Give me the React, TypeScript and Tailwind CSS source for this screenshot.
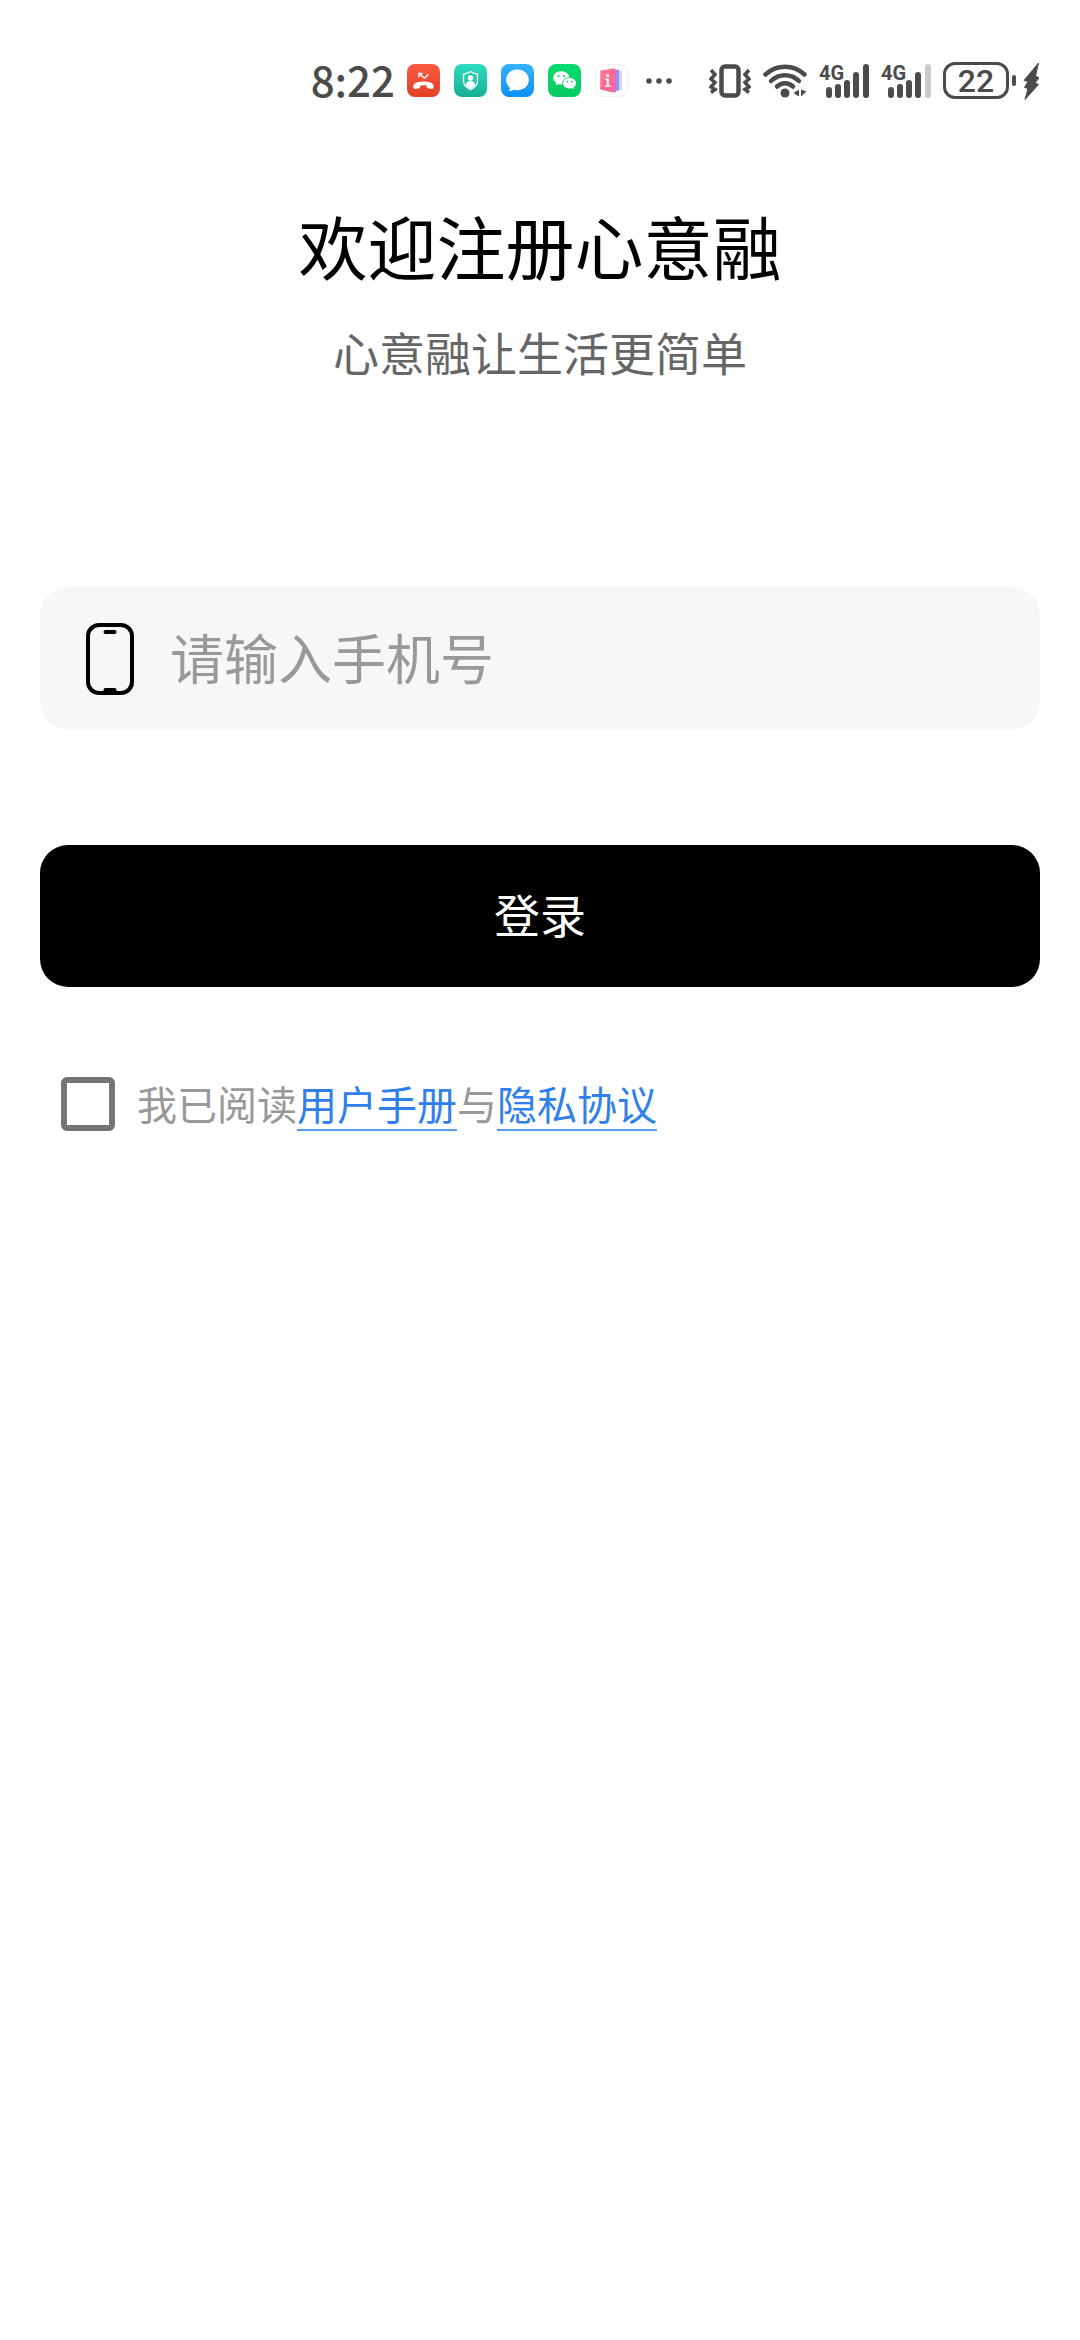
import type { ReactNode } from 'react';

const INK = '#4b4b4b';

function AppBadge({ children, className }: { children: ReactNode; className: string }) {
  return (
    <span className={`size-[33px] shrink-0 overflow-hidden rounded-lg ${className}`}>
      <svg viewBox="0 0 33 33" className="block size-full" aria-hidden="true">
        {children}
      </svg>
    </span>
  );
}

function MissedCall() {
  return (
    <AppBadge className="bg-linear-to-b from-[#fb5a40] to-[#e23f26]">
      <path d="M6.5 23.5c-1-3 1.500-6 10-6s11 3 10 6c-.4 1.400-1.500 1.600-3 1.300l-2.600-.6c-1.200-.3-1.300-1-1.300-2.600-2-.6-4.200-.6-6.200 0 0 1.600-.1 2.300-1.300 2.600l-2.600.6c-1.500.3-2.600.1-3-1.300z" fill="#fff" />
      <path d="M11.800 13.500V9.500h4M12.300 10l5.200 4 4-3.800" fill="none" stroke="#fff" strokeWidth="1.400" />
    </AppBadge>
  );
}

function Guard() {
  return (
    <AppBadge className="bg-linear-to-b from-[#2edcc0] to-[#14b096]">
      <path d="M16.500 7.600c2 1.600 4.300 2.300 7 2.500v6.900c0 4-3 6.800-7 8.600-4-1.800-7-4.600-7-8.600v-6.900c2.700-.2 5-.9 7-2.500z" fill="none" stroke="#fff" strokeWidth="1.300" />
      <circle cx="16.500" cy="14" r="2.700" fill="#fff" />
      <path d="M11.800 21c.2-2.600 2-4 4.700-4s4.500 1.400 4.700 4c-1.200 1.800-2.800 3-4.700 4-1.900-1-3.500-2.200-4.700-4z" fill="#fff" />
    </AppBadge>
  );
}

function Messages() {
  return (
    <AppBadge className="bg-linear-to-b from-[#35b2fc] to-[#0a90f8]">
      <path d="M16.500 5.500c6.600 0 11.300 4.400 11.300 10.300s-4.700 10.400-11.300 10.400c-1.400 0-2.700-.2-4-.5-1.300 1-2.800 1.300-4.500 1.200.8-1.100 1-2.200.6-3.500-2.200-2-3.500-4.500-3.500-7.600C5.100 9.900 9.900 5.500 16.500 5.500z" fill="#fff" />
    </AppBadge>
  );
}

function Chat() {
  return (
    <AppBadge className="bg-linear-to-b from-[#07dc70] to-[#08c860]">
      <path d="M13.300 7.300c4.400 0 7.800 2.700 8 6.200-4.400.1-7.500 3-7.100 7-1.500.1-2.700-.1-3.900-.5l-2.800 1.500.7-2.600c-2-1.300-3-3.100-3-5.100 0-3.700 3.600-6.500 8.100-6.500z" fill="#fff" />
      <path d="M21.500 13.700c3.800 0 6.800 2.400 6.800 5.500 0 1.800-1 3.300-2.500 4.300l.5 2.100-2.300-1.200c-.8.200-1.600.3-2.500.3-3.800 0-6.800-2.400-6.800-5.500s3-5.500 6.800-5.500z" fill="#fff" stroke="#08d068" strokeWidth=".6" />
      <circle cx="10.600" cy="12" r="1.100" fill="#08d269" />
      <circle cx="16" cy="12" r="1.100" fill="#08d269" />
      <circle cx="19.300" cy="17.600" r=".9" fill="#08d269" />
      <circle cx="23.800" cy="17.600" r=".9" fill="#08d269" />
    </AppBadge>
  );
}

function InfoBook() {
  return (
    <AppBadge className="border border-[#f0f0f0] bg-white">
      <defs>
        <linearGradient id="cover" x1="0" y1="0" x2="1" y2="1">
          <stop offset="0" stopColor="#ff7f9c" />
          <stop offset=".5" stopColor="#ff6790" />
          <stop offset="1" stopColor="#e86cb4" />
        </linearGradient>
      </defs>
      <path d="M18 6h9.500v20.500H18z" fill="#d3d2fb" />
      <path d="M17 5h7.500v22.500H17z" fill="#8d92f6" />
      <path d="M15 6l6-1.500v24L15 27z" fill="#c66fd0" />
      <path d="M4.500 5.800L19.500 3.500 21 5v23l-1.500 1.500-15-3.500z" fill="url(#cover)" />
      <circle cx="12.300" cy="11.300" r="1.700" fill="#fff" />
      <path d="M10 14.500h3.600v7.200h1.600v1.800H9.800v-1.800h1.600v-5.400H10z" fill="#fff" />
    </AppBadge>
  );
}

function Vibrate() {
  return (
    <svg viewBox="0 0 42 34" className="h-[34px] w-[42px] shrink-0" fill="none" stroke={INK} role="img" aria-label="振动">
      <rect x="12.500" y="2.500" width="17" height="29" rx="3.500" strokeWidth="4.500" />
      <path d="M2 6l4 4.500L2 15l4 3.500L2 23l4 2.500-4 3" strokeWidth="3.500" />
      <path d="M40 6l-4 4.500 4 4.500-4 3.500 4 4.500-4 2.500 4 3" strokeWidth="3.500" />
    </svg>
  );
}

function Wifi() {
  return (
    <svg viewBox="0 0 44 34" className="h-[34px] w-[44px] shrink-0" fill="none" stroke={INK} strokeWidth="4.500" strokeLinecap="round" role="img" aria-label="无线网络">
      <path d="M2.500 10.500c11-10.500 28-10.500 39 0" />
      <path d="M8 17c8-7.700 20-7.700 28 0" />
      <path d="M14 22.500c4.600-4.300 11.400-4.300 16 0" />
      <circle cx="22" cy="29" r="4.500" fill={INK} stroke="none" />
      <path d="M36 25.500v7l-5.500-3.500zM38 25.500v7l5.500-5z" fill={INK} stroke="none" />
    </svg>
  );
}

function Signal({ weak = false }: { weak?: boolean }) {
  return (
    <svg viewBox="0 0 50 34" className="h-[34px] w-[50px] shrink-0 overflow-visible" fill={INK} role="img" aria-label="4G 信号">
      <text x="0" y="16" fontSize="20" fontWeight="700" className="font-['Roboto',sans-serif]">
        4G
      </text>
      <rect x="7" y="23" width="6" height="11" rx="3" />
      <rect x="16" y="20" width="6" height="14" rx="3" />
      <rect x="25" y="16" width="6" height="18" rx="3" />
      <rect x="34" y="8" width="6" height="26" rx="3" />
      <rect x="44" y="0" width="6" height="34" rx="3" fill={weak ? '#cacaca' : INK} />
    </svg>
  );
}

function Battery() {
  return (
    <div className="flex shrink-0 items-center">
      <span className="flex h-[37px] w-[66px] items-center justify-center rounded-xl border-3 border-[#4b4b4b] font-['Roboto',sans-serif] text-[32px] leading-[32px] font-medium">
        22
      </span>
      <span className="ml-[3px] h-[11px] w-1 rounded-sm bg-[#4b4b4b]" />
      <svg viewBox="0 0 17 38" className="ml-[7px] h-[38px] w-[17px]" fill={INK} role="img" aria-label="充电中">
        <path d="M15.500 1L1 18.500l4 1-3.500 6 3.500 1L2 37.500l13.500-15-3.500-1.500 4-5-3.500-2z" stroke={INK} strokeLinejoin="round" />
      </svg>
    </div>
  );
}

function StatusBar() {
  return (
    <div className="flex h-[161px] items-center justify-end pr-10 text-[#4b4b4b]">
      <time className="mr-3 pb-1 text-[42px] leading-[42px] font-medium">8:22</time>
      <div className="flex items-center gap-[14px]">
        <MissedCall />
        <Guard />
        <Messages />
        <Chat />
        <InfoBook />
      </div>
      <svg viewBox="0 0 28 8" className="ml-[17px] h-2 w-7 shrink-0" fill={INK} aria-hidden="true">
        <circle cx="4" cy="4" r="2.800" />
        <circle cx="14" cy="4" r="2.800" />
        <circle cx="24" cy="4" r="2.800" />
      </svg>
      <div className="ml-9 flex items-center gap-3">
        <Vibrate />
        <Wifi />
        <Signal />
        <Signal weak />
        <Battery />
      </div>
    </div>
  );
}

function PhoneIcon() {
  return (
    <svg viewBox="0 0 48 72" className="h-[72px] w-12 shrink-0" aria-hidden="true">
      <rect x="2" y="2" width="44" height="68" rx="11" fill="none" stroke="#000" strokeWidth="4" />
      <rect x="17.500" y="7" width="13" height="4" rx="2" />
      <rect x="17.500" y="65" width="13" height="5" rx="2" />
    </svg>
  );
}

export default function App() {
  return (
    <div className="min-h-screen bg-white font-['Noto_Sans_CJK_SC',sans-serif]">
      <StatusBar />
      <main className="px-10">
        <header className="pt-11 text-center">
          <h1 className="text-[69px] leading-[80px] text-black">欢迎注册心意融</h1>
          <p className="mt-[38px] text-[46px] leading-[56px] text-[#666666]">心意融让生活更简单</p>
        </header>
        <form onSubmit={(e) => e.preventDefault()}>
          <label className="mt-[208px] flex h-[143px] items-center rounded-[28px] bg-[#f7f7f7] px-[46px]">
            <PhoneIcon />
            <input
              type="tel"
              aria-label="手机号"
              placeholder="请输入手机号"
              className="ml-9 h-20 min-w-0 flex-1 bg-transparent pb-1 text-[54px] text-black outline-none placeholder:text-[#999999]"
            />
          </label>
          <button type="submit" className="mt-[115px] block h-[142px] w-full rounded-[28px] bg-black pb-1.5 text-[46px] text-white">
            登录
          </button>
          <div className="mt-[90px] flex items-center pl-[21px] text-[40px] leading-[52px] text-[#999999]">
            <input
              id="agree"
              type="checkbox"
              className="size-[54px] shrink-0 appearance-none rounded-md border-6 border-[#757575] bg-white checked:bg-[#757575]"
            />
            <div className="ml-[22px]">
              <label htmlFor="agree">我已阅读</label>
              <a href="#manual" className="inline-block h-[54px] border-b-2 border-[#5a9cf2] text-[#2f80ed]">
                用户手册
              </a>
              与
              <a href="#privacy" className="inline-block h-[54px] border-b-2 border-[#5a9cf2] text-[#2f80ed]">
                隐私协议
              </a>
            </div>
          </div>
        </form>
      </main>
    </div>
  );
}
